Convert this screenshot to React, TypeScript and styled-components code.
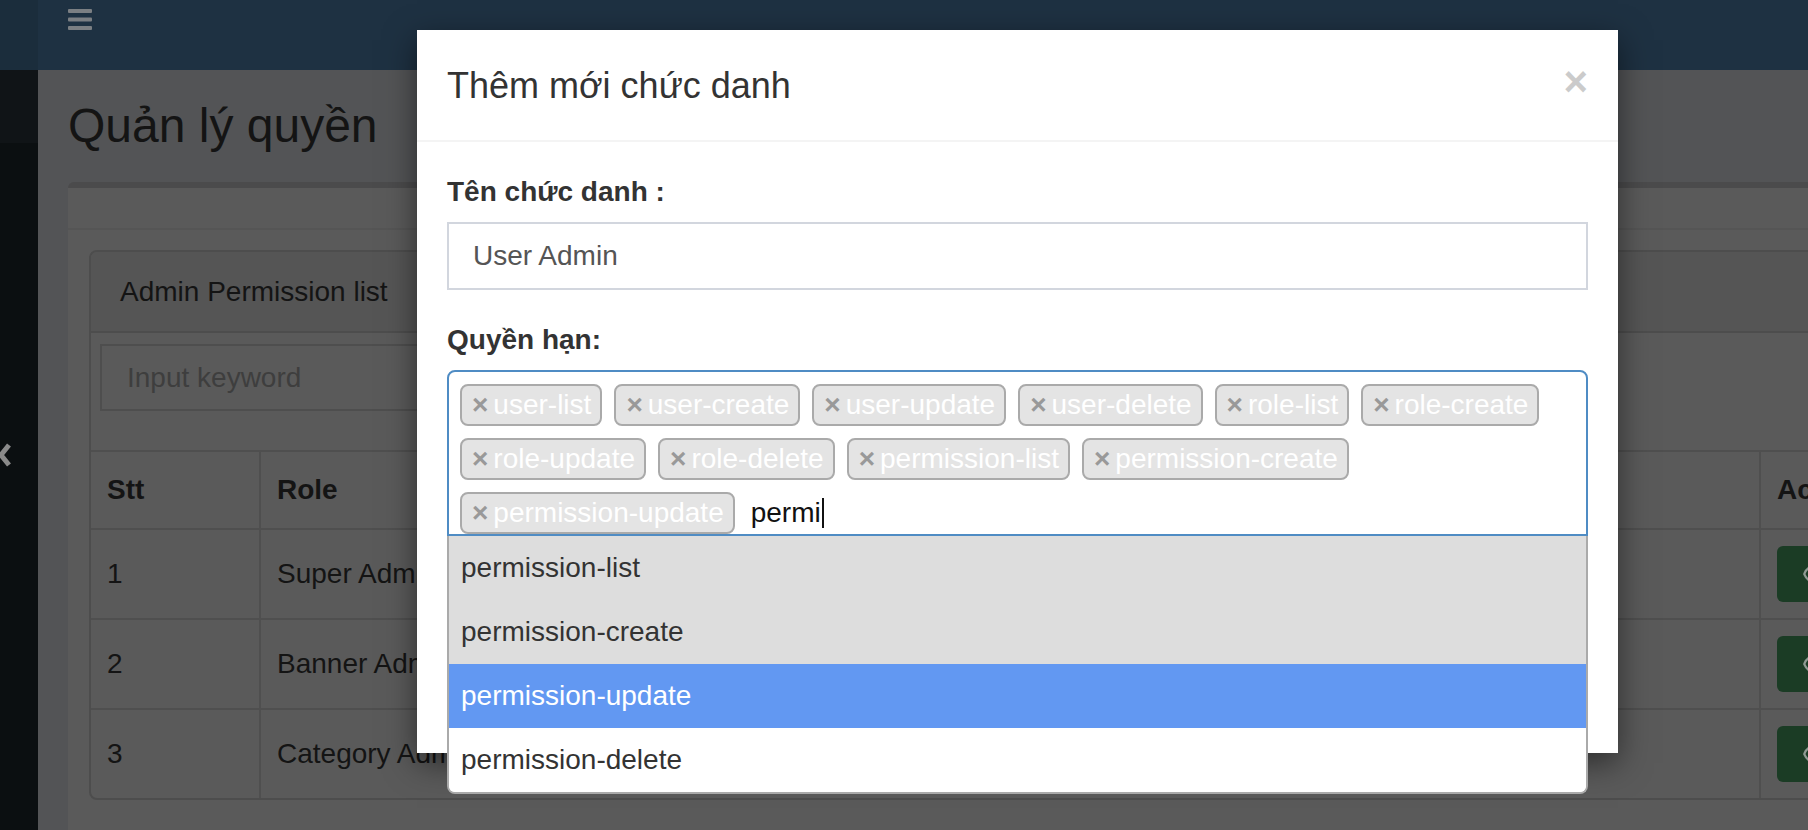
import React from 'react';
import styled, {createGlobalStyle} from "styled-components";
import {Eye} from "lucide-react";

const permissions = [
    "user-list",
    "user-create",
    "user-update",
    "user-delete",
    "role-list",
    "role-create",
    "role-update",
    "role-delete",
    "permission-list",
    "permission-create",
    "permission-update",
]

type OptionState = "selected" | "highlighted" | "normal"

const options: { label: string, state: OptionState }[] = [
    {label: "permission-list", state: "selected"},
    {label: "permission-create", state: "selected"},
    {label: "permission-update", state: "highlighted"},
    {label: "permission-delete", state: "normal"},
]

const roles = [
    {id: 1, name: "Super Admin"},
    {id: 2, name: "Banner Admin"},
    {id: 3, name: "Category Admin"},
]

const GlobalStyle = createGlobalStyle`
  * {
    box-sizing: border-box;
  }

  html, body {
    margin: 0;
    padding: 0;
  }

  body {
    width: 1808px;
    height: 830px;
    overflow: hidden;
    font-family: "Liberation Sans", Arial, sans-serif;
    font-size: 28px;
    color: #141414;
  }
`

const Screen = styled.div`
  position: relative;
  width: 1808px;
  height: 830px;
  overflow: hidden;
  display: grid;
  grid-template-columns: 38px 1fr;
  grid-template-rows: 70px 1fr;
  background: #535456;
`

const Logo = styled.div`
  background: #1b2d3c;
`

const Navbar = styled.header`
  background: #1e3142;
  padding: 9px 0 0 30px;
`

const Toggle = styled.svg`
  display: block;
  fill: #7b7f83;
`

const Sidebar = styled.aside`
  background: #0b0f11;
  overflow: hidden;
`

const SidebarUser = styled.div`
  height: 73px;
  background: #101417;
`

const Collapse = styled.svg`
  display: block;
  margin: 300px 0 0 -2px;
  stroke: #8a8a8a;
  fill: none;
`

const Content = styled.main`
  min-width: 0;
  overflow: hidden;
  padding: 29px 0 0 30px;
`

const PageTitle = styled.h1`
  margin: 0;
  font-size: 48px;
  line-height: 53px;
  font-weight: 400;
  color: #141414;
  white-space: nowrap;
`

const Box = styled.section`
  margin-top: 30px;
  width: 1800px;
  background: #5a5a5a;
  border-top: 6px solid #4b4b4c;
  border-radius: 6px;
`

const BoxHeader = styled.div`
  height: 42px;
  border-bottom: 2px solid #555555;
`

const BoxBody = styled.div`
  padding: 20px 0 40px 21px;
`

const Panel = styled.div`
  border: 2px solid #4d4d4d;
  border-radius: 8px;
  background: #5a5a5a;
`

const PanelHeading = styled.div`
  height: 81px;
  display: flex;
  align-items: center;
  padding: 0 29px;
  background: #555555;
  border-bottom: 2px solid #4d4d4d;
  border-radius: 6px 6px 0 0;
`

const SearchRow = styled.div`
  padding: 11px 9px 39px;
`

const SearchInput = styled.input`
  display: block;
  width: 700px;
  height: 67px;
  padding: 0 25px;
  border: 2px solid #4e4e4e;
  background: transparent;
  font: inherit;
  outline: none;

  &::placeholder {
    color: #3e3e3e;
  }
`

const Row = styled.div<{ $head?: boolean }>`
  display: grid;
  grid-template-columns: 168px 1500px 1fr;
  height: ${p => p.$head ? 78 : 90}px;
  border-top: 2px solid #4f4f4f;
  font-weight: ${p => p.$head ? 700 : 400};
`

const Cell = styled.div`
  display: flex;
  align-items: center;
  padding: 0 16px;
  white-space: nowrap;
  overflow: hidden;

  & + & {
    border-left: 2px solid #4f4f4f;
  }
`

const ViewButton = styled.button`
  display: flex;
  align-items: center;
  width: 100px;
  height: 56px;
  padding: 0 0 0 25px;
  border: 0;
  border-radius: 6px;
  background: #1b3c25;
  color: #8f9a93;
`

const Modal = styled.div`
  position: absolute;
  left: 417px;
  top: 30px;
  width: 1201px;
  height: 723px;
  background: #fff;
  box-shadow: 0 10px 30px rgba(0, 0, 0, 0.5);
  z-index: 10;
`

const ModalHeader = styled.div`
  display: flex;
  justify-content: space-between;
  align-items: flex-start;
  padding: 30px 30px 29px;
  border-bottom: 2px solid #f4f4f4;
`

const ModalTitle = styled.h4`
  margin: 0;
  font-size: 36px;
  line-height: 51px;
  font-weight: 500;
  color: #333;
`

const Close = styled.button`
  margin-top: 1px;
  padding: 0;
  border: 0;
  background: none;
  font-family: inherit;
  font-size: 42px;
  font-weight: 700;
  line-height: 1;
  color: #000;
  opacity: 0.2;
`

const ModalBody = styled.div`
  padding: 30px;
`

const FormGroup = styled.div`
  margin-bottom: 30px;
`

const Label = styled.label`
  display: block;
  margin-bottom: 10px;
  font-size: 28px;
  line-height: 40px;
  font-weight: 700;
  color: #333;
`

const TextInput = styled.input`
  display: block;
  width: 100%;
  height: 68px;
  padding: 0 24px;
  border: 2px solid #d2d6de;
  border-radius: 0;
  font: inherit;
  color: #555;
  outline: none;
`

const Select = styled.div`
  position: relative;
`

const TagBox = styled.div`
  display: flex;
  flex-wrap: wrap;
  align-content: flex-start;
  padding: 0 11px;
  border: 2px solid #4f8cc4;
  border-radius: 8px 8px 0 0;
  background: #fff;
`

const Tag = styled.span`
  display: inline-flex;
  align-items: center;
  height: 42px;
  margin: 12px 12px 0 0;
  padding: 0 9px 0 10px;
  border: 2px solid #aaa;
  border-radius: 8px;
  background: #e4e4e4;
  color: #fff;
  line-height: 38px;
  white-space: nowrap;
`

const Remove = styled.span`
  margin-right: 5px;
  color: #999;
  font-weight: 700;
`

const Typed = styled.span`
  display: inline-flex;
  align-items: center;
  height: 42px;
  margin-top: 12px;
  padding-left: 4px;
  color: #111;
`

const Caret = styled.span`
  width: 2px;
  height: 30px;
  margin-left: 1px;
  background: #111;
`

const Dropdown = styled.ul`
  position: absolute;
  top: 100%;
  left: 0;
  right: 0;
  margin: 0;
  padding: 0;
  list-style: none;
  background: #fff;
  border: 2px solid #aaa;
  border-top: 0;
  border-radius: 0 0 8px 8px;
  overflow: hidden;
`

const Option = styled.li<{ $state: OptionState }>`
  height: 64px;
  padding: 0 12px;
  line-height: 64px;
  background: ${p => p.$state === "highlighted" ? "#6298f2" : p.$state === "selected" ? "#dddddd" : "#fff"};
  color: ${p => p.$state === "highlighted" ? "#fff" : "#333"};
`

export default function App() {
    return (
        <>
            <GlobalStyle/>
            <Screen>
                <Logo/>
                <Navbar>
                    <Toggle width="24" height="21" viewBox="0 0 24 21">
                        <rect x="0" y="0" width="24" height="4" rx="1"/>
                        <rect x="0" y="8.5" width="24" height="4" rx="1"/>
                        <rect x="0" y="17" width="24" height="4" rx="1"/>
                    </Toggle>
                </Navbar>
                <Sidebar>
                    <SidebarUser/>
                    <Collapse width="14" height="24" viewBox="0 0 14 24">
                        <polyline points="11,2 3,12 11,22" strokeWidth="5"/>
                    </Collapse>
                </Sidebar>
                <Content>
                    <PageTitle>Quản lý quyền</PageTitle>
                    <Box>
                        <BoxHeader/>
                        <BoxBody>
                            <Panel>
                                <PanelHeading>Admin Permission list</PanelHeading>
                                <SearchRow>
                                    <SearchInput placeholder="Input keyword" readOnly/>
                                </SearchRow>
                                <Row $head>
                                    <Cell>Stt</Cell>
                                    <Cell>Role</Cell>
                                    <Cell>Action</Cell>
                                </Row>
                                {roles.map(role => (
                                    <Row key={role.id}>
                                        <Cell>{role.id}</Cell>
                                        <Cell>{role.name}</Cell>
                                        <Cell>
                                            <ViewButton><Eye size={28}/></ViewButton>
                                        </Cell>
                                    </Row>
                                ))}
                            </Panel>
                        </BoxBody>
                    </Box>
                </Content>

                <Modal>
                    <ModalHeader>
                        <ModalTitle>Thêm mới chức danh</ModalTitle>
                        <Close>×</Close>
                    </ModalHeader>
                    <ModalBody>
                        <FormGroup>
                            <Label>Tên chức danh :</Label>
                            <TextInput defaultValue="User Admin"/>
                        </FormGroup>
                        <FormGroup>
                            <Label>Quyền hạn:</Label>
                            <Select>
                                <TagBox>
                                    {permissions.map(p => (
                                        <Tag key={p}><Remove>×</Remove>{p}</Tag>
                                    ))}
                                    <Typed>permi<Caret/></Typed>
                                </TagBox>
                                <Dropdown>
                                    {options.map(o => (
                                        <Option key={o.label} $state={o.state}>{o.label}</Option>
                                    ))}
                                </Dropdown>
                            </Select>
                        </FormGroup>
                    </ModalBody>
                </Modal>
            </Screen>
        </>
    );
}
